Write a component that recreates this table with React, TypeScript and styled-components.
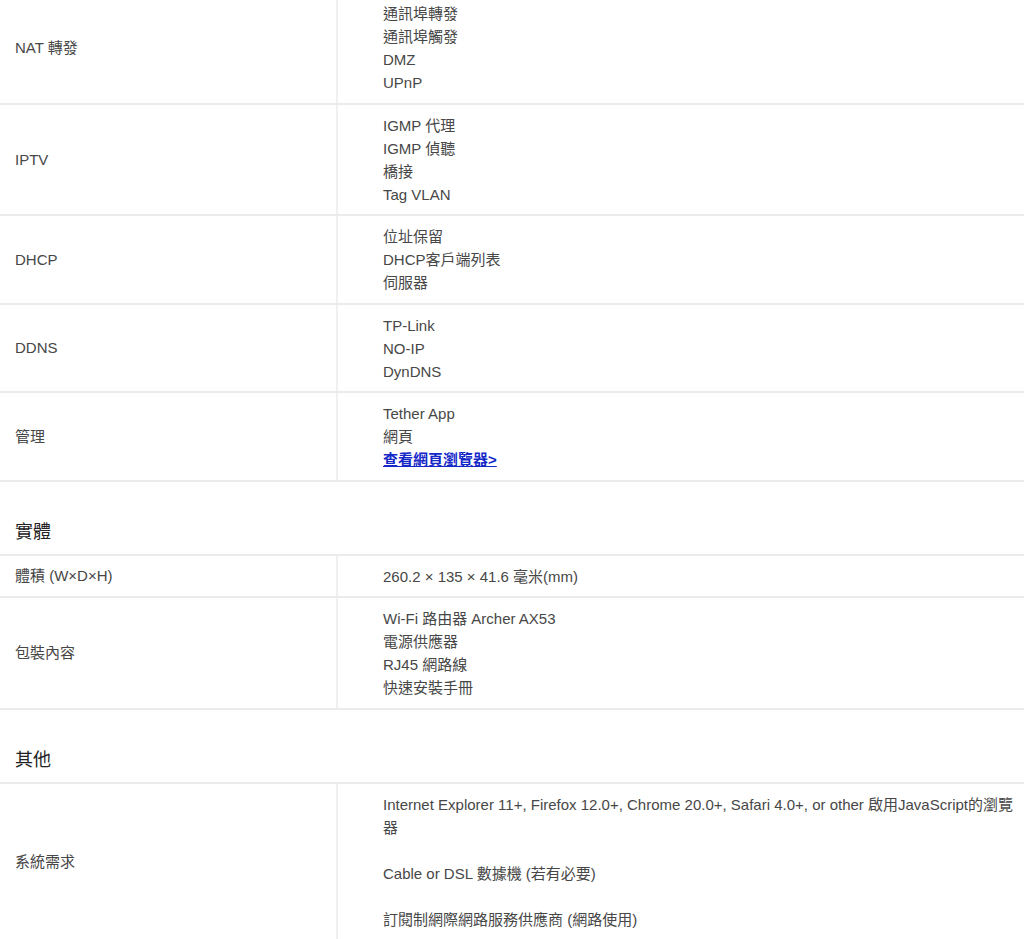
import { createGlobalStyle } from 'styled-components';
import styled from 'styled-components';

interface SpecRow {
  label: string;
  values: string[];
  link?: string;
  spaced?: boolean;
}

interface SpecSection {
  title?: string;
  rows: SpecRow[];
}

const GlobalStyle = createGlobalStyle`
  html, body {
    margin: 0;
    padding: 0;
    background: #ffffff;
  }
  body {
    font-family: 'Liberation Sans', 'Noto Sans CJK TC', sans-serif;
    font-size: 15px;
    color: #474747;
    overflow: hidden;
  }
`;

const Page = styled.div`
  margin-top: -9px;
  width: 1024px;
`;

const SectionTitle = styled.h3`
  margin: 0;
  padding: 38px 0 10px 15px;
  font-size: 18px;
  font-weight: 400;
  line-height: 24px;
  color: #222222;
`;

const Table = styled.div`
  border-top: 2px solid #ebebeb;
`;

const Row = styled.div`
  display: grid;
  grid-template-columns: 336px 1fr;
  border-bottom: 2px solid #ebebeb;
`;

const Label = styled.div`
  display: flex;
  align-items: center;
  padding-left: 15px;
  line-height: 23px;
`;

const Values = styled.div<{ $spaced?: boolean }>`
  border-left: 2px solid #f0f0f0;
  padding: 9px 8px 8.5px 45px;
  line-height: 23px;

  p {
    margin: 0 0 ${p => (p.$spaced ? '23px' : '0')};
  }
  p:last-child {
    margin-bottom: 0;
  }
`;

const Link = styled.a`
  color: #1428c8;
  font-weight: 700;
  text-decoration: underline;
`;

const sections: SpecSection[] = [
  {
    rows: [
      { label: 'NAT 轉發', values: ['通訊埠轉發', '通訊埠觸發', 'DMZ', 'UPnP'] },
      { label: 'IPTV', values: ['IGMP 代理', 'IGMP 偵聽', '橋接', 'Tag VLAN'] },
      { label: 'DHCP', values: ['位址保留', 'DHCP客戶端列表', '伺服器'] },
      { label: 'DDNS', values: ['TP-Link', 'NO-IP', 'DynDNS'] },
      { label: '管理', values: ['Tether App', '網頁'], link: '查看網頁瀏覽器>' },
    ],
  },
  {
    title: '實體',
    rows: [
      { label: '體積 (W×D×H)', values: ['260.2 × 135 × 41.6 毫米(mm)'] },
      {
        label: '包裝內容',
        values: ['Wi-Fi 路由器 Archer AX53', '電源供應器', 'RJ45 網路線', '快速安裝手冊'],
      },
    ],
  },
  {
    title: '其他',
    rows: [
      {
        label: '系統需求',
        spaced: true,
        values: [
          'Internet Explorer 11+, Firefox 12.0+, Chrome 20.0+, Safari 4.0+, or other 啟用JavaScript的瀏覽器',
          'Cable or DSL 數據機 (若有必要)',
          '訂閱制網際網路服務供應商 (網路使用)',
        ],
      },
    ],
  },
];

export default function App() {
  return (
    <Page>
      <GlobalStyle />
      {sections.map((section, i) => (
        <div key={i}>
          {section.title ? <SectionTitle>{section.title}</SectionTitle> : null}
          <Table>
            {section.rows.map(row => (
              <Row key={row.label}>
                <Label>{row.label}</Label>
                <Values $spaced={row.spaced}>
                  {row.values.map(v => (
                    <p key={v}>{v}</p>
                  ))}
                  {row.link ? (
                    <p>
                      <Link href='#'>{row.link}</Link>
                    </p>
                  ) : null}
                </Values>
              </Row>
            ))}
          </Table>
        </div>
      ))}
    </Page>
  );
}
